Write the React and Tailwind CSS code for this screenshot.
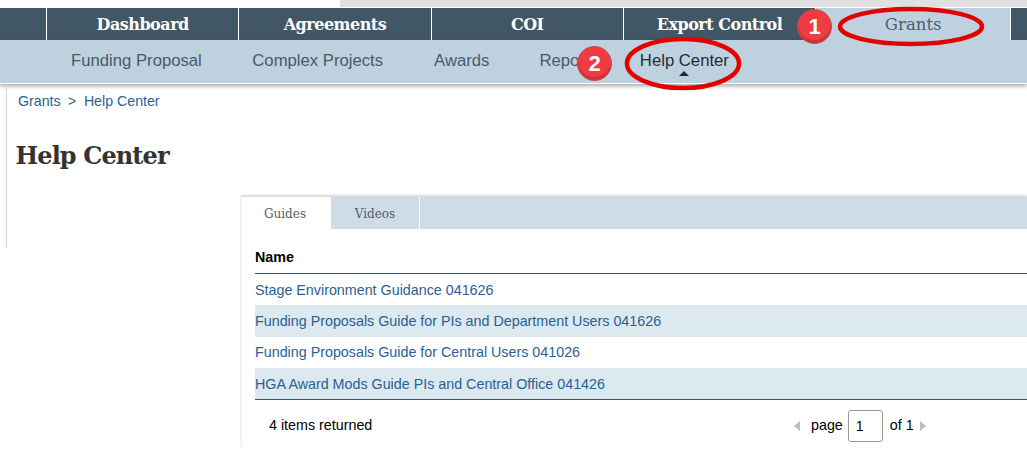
const slab = "font-['DejaVu_Serif',serif]";
const top = ["Dashboard", "Agreements", "COI", "Export Control"];
const rows = [
  ["Stage Environment Guidance 041626", false],
  ["Funding Proposals Guide for PIs and Department Users 041626", true],
  ["Funding Proposals Guide for Central Users 041026", false],
  ["HGA Award Mods Guide PIs and Central Office 041426", true],
];

function Badge({ n, className }) {
  return (
    <div className={`absolute flex h-[35px] w-[35px] items-center justify-center rounded-full border border-[#c9494d] bg-[#ef3b42] text-[22px] font-bold text-white shadow-[inset_0_-3px_0_#c8343a] font-['Liberation_Sans',sans-serif] ${className}`}>
      {n}
    </div>
  );
}

function Ring({ className, w, h }) {
  return (
    <svg className={`absolute ${className}`} width={w} height={h} viewBox={`0 0 ${w} ${h}`} fill="none">
      <ellipse cx={w / 2} cy={h / 2} rx={w / 2 - 3} ry={h / 2 - 3} stroke="#e50000" strokeWidth="4.5" />
    </svg>
  );
}

export default function App() {
  return (
    <div className="relative h-[457px] w-[1027px] overflow-hidden bg-white font-['Liberation_Sans',sans-serif]">
      <div className="flex h-[7px]">
        <div className="w-[340px] bg-white" />
        <div className="flex-1 bg-[#e0e0e0]" />
      </div>
      <div className="h-px bg-white" />
      <nav className={`flex h-[32px] bg-[#425766] text-[16px] font-bold tracking-[-0.5px] text-white ${slab}`}>
        <div className="w-[47px] border-r border-white" />
        {top.map((t) => (
          <div key={t} className="flex w-[192.3px] items-center justify-center border-r border-white pt-[1px] last:border-r-0">
            {t}
          </div>
        ))}
        <div className="flex w-[194px] items-center justify-center bg-[#bdd2de] pt-[2px] text-[16.5px] font-normal tracking-normal text-[#4a6072]">
          Grants
        </div>
        <div className="flex-1 border-l border-white" />
      </nav>
      <div className="h-[44px] border-b border-white bg-[#bdd2de] shadow-[0_2px_4px_rgba(0,0,0,0.35)]">
        <div className="flex h-[41px] items-center text-[16.7px] text-[#4a5a68]">
          <span className="ml-[71px]">Funding Proposal</span>
          <span className="ml-[50.5px]">Complex Projects</span>
          <span className="ml-[51px]">Awards</span>
          <span className="ml-[50px]">Reports</span>
          <span className="relative ml-[42px] text-[#1f2d3a]">
            Help Center
            <span className="absolute left-1/2 top-[23px] h-0 w-0 -translate-x-1/2 border-x-[5px] border-b-[5px] border-x-transparent border-b-[#1f2d3a]" />
          </span>
        </div>
      </div>

      <div className="flex">
        <div className="h-[164px] w-[7px] border-r border-[#d4d4d4]" />
        <div className="flex-1">
          <div className="flex pl-[11px] pt-[9px] text-[14.2px] leading-[17px] text-[#2a5f95]">
            <span>Grants</span>
            <span className="mx-[7.5px]">&gt;</span>
            <span>Help Center</span>
          </div>
          <h1 className={`ml-[8.5px] mt-[30px] text-[24px] leading-[32px] font-bold tracking-[-0.9px] text-[#333333] ${slab}`}>Help Center</h1>
        </div>
      </div>

      <section className="absolute left-[241px] top-[197px] w-[786px] border-l border-[#f0f0f0] shadow-[0_-2px_2px_rgba(0,0,0,0.15)]">
        <div className={`flex h-[32px] bg-[#cddce6] text-[12px] ${slab}`}>
          <div className="flex w-[89px] items-center justify-center bg-white pr-[3px] pt-[1px] text-[#555f66]">Guides</div>
          <div className="flex w-[89px] items-center justify-center border-r border-white pt-[1px] text-[#4e5d68]">Videos</div>
        </div>
        <div className="pl-[13px]">
          <div className="flex h-[45px] items-end border-b border-[#425766] pb-[5px] text-[14.3px] font-bold text-black">Name</div>
          {rows.map(([t, shade]) => (
            <div key={t} className={`flex h-[31.25px] items-center pt-[2px] text-[14.3px] text-[#2a5f95] ${shade ? "bg-[#dce9ef]" : "bg-white"}`}>
              {t}
            </div>
          ))}
          <div className="flex h-[50px] items-center border-t border-[#425766] pl-[14px] pt-[2px] text-[14.3px] text-black">
            <span>4 items returned</span>
            <div className="absolute left-[552px] flex items-center">
              <span className="h-0 w-0 border-y-[5px] border-r-[6px] border-y-transparent border-r-[#b9bfc2]" />
              <span className="ml-[11px]">page</span>
              <input readOnly value="1" className="ml-[5px] h-[32px] w-[35px] rounded-[3px] border border-[#999999] pl-[7px] text-[14.3px] text-black" />
              <span className="ml-[7px]">of 1</span>
              <span className="ml-[6px] h-0 w-0 border-y-[5px] border-l-[6px] border-y-transparent border-l-[#b9bfc2]" />
            </div>
          </div>
        </div>
      </section>

      <Ring className="left-[837px] top-[6px]" w={148} h={41} />
      <Ring className="left-[624px] top-[36px]" w={118} h={55} />
      <Badge n="1" className="left-[797px] top-[9px]" />
      <Badge n="2" className="left-[577px] top-[46px]" />
    </div>
  );
}
